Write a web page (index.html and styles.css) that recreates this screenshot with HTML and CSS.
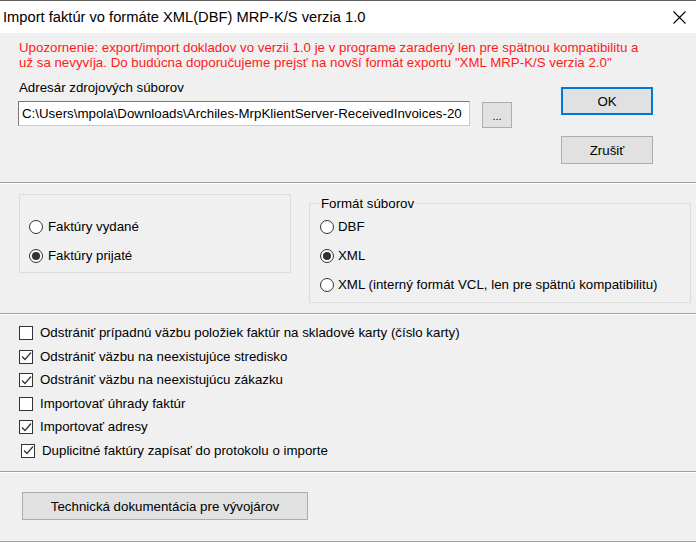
FILE: index.html
```html
<!DOCTYPE html>
<html>
<head>
<meta charset="utf-8">
<link rel="stylesheet" href="styles.css">
</head>
<body>
<div class="window">
  <div class="titlebar">
    <span class="title">Import faktúr vo formáte XML(DBF) MRP-K/S verzia 1.0</span>
    <span class="close"><svg width="13" height="13" viewBox="0 0 13 13"><path d="M0.5 0.5L12.5 12.5M12.5 0.5L0.5 12.5" stroke="#000" stroke-width="1.1" fill="none"/></svg></span>
  </div>
  <div class="client">
    <section class="sec sec-top">
      <p class="warning">Upozornenie: export/import dokladov vo verzii 1.0 je v programe zaradený len pre spätnou kompatibilitu a<br>už sa nevyvíja. Do budúcna doporučujeme prejsť na novší formát exportu "XML MRP-K/S verzia 2.0"</p>
      <div class="dir-row">
        <div class="dir-col">
          <div class="label">Adresár zdrojových súborov</div>
          <div class="input-row">
            <div class="input"><span>C:\Users\mpola\Downloads\Archiles-MrpKlientServer-ReceivedInvoices-20</span></div>
            <div class="btn btn-browse">...</div>
          </div>
        </div>
        <div class="btn-col">
          <div class="btn btn-ok">OK</div>
          <div class="btn btn-cancel">Zrušiť</div>
        </div>
      </div>
    </section>
    <section class="sec sec-mid">
      <div class="group group-type">
        <label class="radio"><span class="rb"></span>Faktúry vydané</label>
        <label class="radio"><span class="rb on"></span>Faktúry prijaté</label>
      </div>
      <fieldset class="group group-format">
        <legend>Formát súborov</legend>
        <label class="radio"><span class="rb"></span>DBF</label>
        <label class="radio"><span class="rb on"></span>XML</label>
        <label class="radio"><span class="rb"></span>XML (interný formát VCL, len pre spätnú kompatibilitu)</label>
      </fieldset>
    </section>
    <section class="sec sec-checks">
      <label class="check"><span class="cb"></span>Odstrániť prípadnú väzbu položiek faktúr na skladové karty (číslo karty)</label>
      <label class="check"><span class="cb on"><svg width="11" height="11" viewBox="0 0 11 11"><path d="M1 5.5L4 8.5L10 1.5" stroke="#333" stroke-width="1.2" fill="none"/></svg></span>Odstrániť väzbu na neexistujúce stredisko</label>
      <label class="check"><span class="cb on"><svg width="11" height="11" viewBox="0 0 11 11"><path d="M1 5.5L4 8.5L10 1.5" stroke="#333" stroke-width="1.2" fill="none"/></svg></span>Odstrániť väzbu na neexistujúcu zákazku</label>
      <label class="check"><span class="cb"></span>Importovať úhrady faktúr</label>
      <label class="check"><span class="cb on"><svg width="11" height="11" viewBox="0 0 11 11"><path d="M1 5.5L4 8.5L10 1.5" stroke="#333" stroke-width="1.2" fill="none"/></svg></span>Importovať adresy</label>
      <label class="check check-shift"><span class="cb on"><svg width="11" height="11" viewBox="0 0 11 11"><path d="M1 5.5L4 8.5L10 1.5" stroke="#333" stroke-width="1.2" fill="none"/></svg></span>Duplicitné faktúry zapísať do protokolu o importe</label>
    </section>
    <section class="sec sec-bottom">
      <div class="btn btn-doc">Technická dokumentácia pre vývojárov</div>
    </section>
  </div>
</div>
</body>
</html>
```

FILE: styles.css
```css
* { box-sizing: border-box; }
html, body { margin: 0; padding: 0; }
body {
  width: 696px;
  height: 543px;
  overflow: hidden;
  background: #f0f0f0;
  font-family: "Liberation Sans", Arial, sans-serif;
  font-size: 13.3px;
  color: #000;
}
.window {
  border-top: 1px solid #5f5f5f;
}
.titlebar {
  height: 32px;
  background: #fff;
  display: flex;
  align-items: center;
  justify-content: space-between;
  padding-left: 3px;
  padding-right: 10px;
}
.title {
  font-size: 14.7px;
  color: #000;
}
.close {
  display: flex;
  width: 13px;
  height: 13px;
}
.client {
  background: #f0f0f0;
}
.sec {
  border-bottom: 1px solid #a0a0a0;
  box-shadow: 0 1px 0 #ffffff;
}
.sec-top {
  height: 150px;
  padding: 7px 0 0 19px;
}
.warning {
  margin: 0;
  color: #ff1a1a;
  line-height: 15px;
}
.dir-row {
  display: flex;
  margin-top: 10px;
}
.dir-col {
  width: 494px;
  margin-left: -1px;
}
.label {
  line-height: 16px;
  padding-left: 1px;
}
.input-row {
  display: flex;
  margin-top: 5px;
  align-items: flex-start;
}
.input {
  width: 453px;
  height: 25px;
  background: #fff;
  border: 1px solid #7a7a7a;
  border-right-color: #c8c8c8;
  border-bottom-color: #c8c8c8;
  padding: 0 0 0 3px;
  line-height: 23px;
  white-space: nowrap;
  overflow: hidden;
}
.btn {
  background: #e1e1e1;
  border: 1px solid #adadad;
  display: flex;
  align-items: center;
  justify-content: center;
}
.btn-browse {
  width: 30px;
  height: 26px;
  margin-left: 12px;
  margin-top: 1px;
  font-size: 11px;
  padding-top: 2px;
}
.btn-col {
  margin-left: 49px;
  padding-top: 7px;
  display: flex;
  flex-direction: column;
  gap: 21px;
}
.btn-col .btn {
  width: 92px;
  height: 28px;
}
.btn-ok {
  border: 2px solid #0078d7;
}
.sec-mid {
  height: 131px;
  display: flex;
  padding: 11px 0 0 19px;
  align-items: flex-start;
}
.group {
  border: 1px solid #dcdcdc;
  margin: 0;
}
.group-type {
  width: 272px;
  height: 79px;
  padding: 24px 0 0 9px;
  display: flex;
  flex-direction: column;
  gap: 13px;
}
.group-format {
  width: 382px;
  height: 107px;
  margin-left: 18px;
  margin-top: 2px;
  padding: 8px 0 0 10px;
  display: flex;
  flex-direction: column;
  gap: 13px;
}
.group-format legend {
  padding: 0 1px;
  margin-left: 0;
  line-height: 15px;
}
.radio {
  display: flex;
  align-items: center;
  height: 16px;
  line-height: 16px;
}
.rb {
  width: 14px;
  height: 14px;
  border: 1px solid #333;
  border-radius: 50%;
  background: #fff;
  margin-right: 5px;
  display: flex;
  align-items: center;
  justify-content: center;
  flex: none;
}
.rb.on::after {
  content: "";
  width: 8px;
  height: 8px;
  border-radius: 50%;
  background: #333;
}
.group-format .rb {
  margin-right: 4px;
}
.sec-checks {
  height: 158px;
  padding: 11px 0 0 19px;
  display: flex;
  flex-direction: column;
  gap: 7.6px;
}
.check {
  display: flex;
  align-items: center;
  height: 16px;
  line-height: 16px;
}
.check-shift {
  padding-left: 2px;
}
.cb {
  width: 14px;
  height: 14px;
  border: 1px solid #333;
  background: #fff;
  margin-right: 7px;
  display: flex;
  align-items: center;
  justify-content: center;
  flex: none;
}
.sec-bottom {
  height: 70px;
  padding: 20px 0 0 22px;
}
.btn-doc {
  width: 286px;
  height: 28px;
}
```
